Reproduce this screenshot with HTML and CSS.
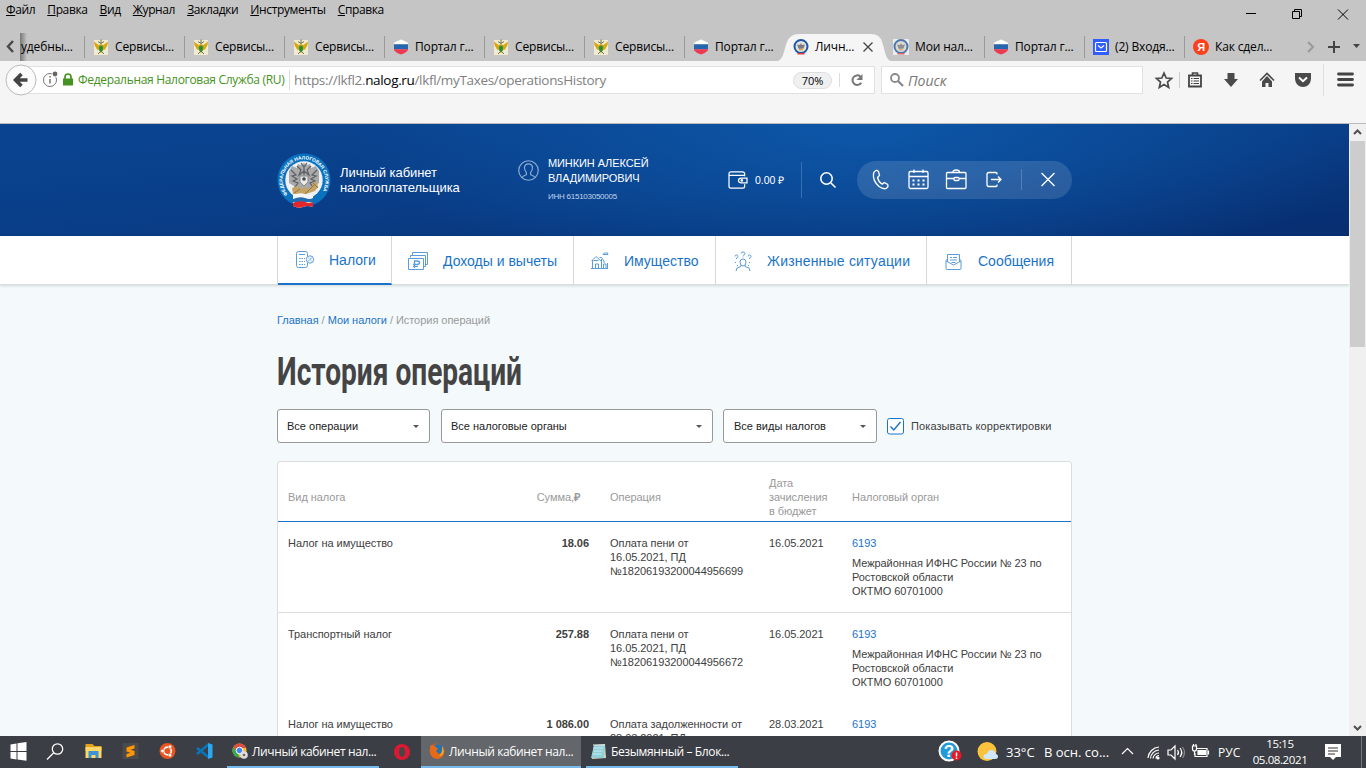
FILE: index.html
```html
<!DOCTYPE html>
<html lang="ru">
<head>
<meta charset="utf-8">
<title>История операций</title>
<link rel="stylesheet" href="styles.css">
</head>
<body>
<svg width="0" height="0" class="defs">
  <symbol id="fssp" viewBox="0 0 16 16"><rect x="1" y="1" width="14" height="15" fill="#efebd3"/><path d="M8 5 5.500 6 1 2.500 1.500 6 4 10.500 6 11 8 14.500 10 11 12 10.500 14.500 6 15 2.500 10.500 6z" fill="#d9a514"/><path d="M5 2.500 8 4.500 11 2.500M8 .5v4M5 15l3-3 3 3" stroke="#76734f" fill="none"/><path d="M8 6.200 10.200 8 9.600 11.500 8 13 6.400 11.500 5.800 8z" fill="#23913a"/></symbol>
  <symbol id="flag" viewBox="0 0 16 16"><path d="M1 5.300V4Q1.500 3 8 .5 14.500 3 15 4v1.300z" fill="#fff"/><path d="M1 5.300h14v5H1z" fill="#2467ae"/><path d="M1 10.300h14v1Q13 14 8 15.500 3 14 1 11.300z" fill="#ed3a50"/></symbol>
  <symbol id="fns" viewBox="0 0 16 16"><circle cx="8" cy="7.500" r="6.500" fill="#e5e3dc" stroke="#1d57a5" stroke-width="2"/><path d="M4 5.500 7 6l1-2 1 2 3-.5-1.500 4L8 11 5.500 9.500z" fill="#777b82"/><path d="m5.500 10 5-1-1 2.500h-3z" fill="#d4aa62"/><path d="M4.500 14h7v1.500h-7z" fill="#e33b40"/></symbol>
</svg>
<div class="window">
  <div class="menubar">
    <nav class="menus"><span><u>Ф</u>айл</span><span><u>П</u>равка</span><span><u>В</u>ид</span><span><u>Ж</u>урнал</span><span><u>З</u>акладки</span><span><u>И</u>нструменты</span><span><u>С</u>правка</span></nav>
    <svg class="winctl" viewBox="0 0 120 31" fill="none" stroke="#000"><path d="M10 13.500h10M56.500 11.500h7v7h-7zM58.500 11v-1.500h7v7H64M102 9.500l10 10M112 9.500l-10 10"/></svg>
  </div>
  <div class="tabs">
    <div class="scroll-left"><svg width="20" height="28" viewBox="0 0 20 28"><path d="m13 8-5 5.500 5 5.500" fill="none" stroke="#4a4a4a" stroke-width="2.500"/></svg></div>
    <div class="tab first"><span>удебны...</span></div>
    <div class="tab"><svg><use href="#fssp"/></svg><span>Сервисы...</span></div>
    <div class="tab"><svg><use href="#fssp"/></svg><span>Сервисы...</span></div>
    <div class="tab"><svg><use href="#fssp"/></svg><span>Сервисы...</span></div>
    <div class="tab"><svg><use href="#flag"/></svg><span>Портал г...</span></div>
    <div class="tab"><svg><use href="#fssp"/></svg><span>Сервисы...</span></div>
    <div class="tab"><svg><use href="#fssp"/></svg><span>Сервисы...</span></div>
    <div class="tab last"><svg><use href="#flag"/></svg><span>Портал г...</span></div>
    <div class="tab active"><svg class="shape" viewBox="0 0 124 29"><path d="M0 29C13 29 11 18 15 9Q18 1 27 1H99Q108 1 110 9C114 18 112 29 124 29z" fill="#f5f5f5"/></svg><svg><use href="#fns"/></svg><span>Личн...</span><svg class="close" viewBox="0 0 10 10"><path d="m.5.5 9 9m0-9-9 9" stroke="#444" stroke-width="1.300"/></svg></div>
    <div class="tab"><svg class="pale"><use href="#fns"/></svg><span>Мои нал...</span></div>
    <div class="tab"><svg><use href="#flag"/></svg><span>Портал г...</span></div>
    <div class="tab"><svg viewBox="0 0 16 16"><path d="M0 0h16v16H0z" fill="#315efb"/><rect x="2.500" y="3.500" width="11" height="9" rx="1" fill="none" stroke="#fff" stroke-width="1.200"/><path d="m5 6.500 3 2.500 3-2.500" fill="none" stroke="#fff" stroke-width="1.200"/></svg><span>(2) Входя...</span></div>
    <div class="tab last"><svg viewBox="0 0 16 16"><circle cx="8" cy="8" r="8" fill="#fc3f1d"/><text x="4.200" y="12.300" class="ya">Я</text></svg><span>Как сдел...</span></div>
    <svg class="tabctl" viewBox="0 0 66 28" fill="none"><path d="m8 9 5 5-5 5" stroke="#999" stroke-width="2"/><path d="M28 14h12M34 8v12" stroke="#444" stroke-width="2"/><path d="M53 11h7l-3.500 4z" fill="#444"/></svg>
  </div>
  <div class="toolbar">
    <div class="back"><svg viewBox="0 0 32 32"><circle cx="16" cy="16" r="15" fill="#fbfbfb" stroke="#bbb"/><path d="M22.500 16H11m5.500-6L10.500 16l6 6" fill="none" stroke="#444" stroke-width="3.600"/></svg></div>
    <div class="url">
      <svg class="info" viewBox="0 0 30 20"><circle cx="8" cy="10" r="6.500" fill="none" stroke="#777"/><path d="M8 9v4.500M8 6v1.500" stroke="#777" stroke-width="1.500"/><circle cx="13" cy="4" r="3.200" fill="#fff"/><circle cx="13" cy="4" r="2.400" fill="#666"/><path d="M23 9V7a3 3 0 0 1 6 0v2" fill="none" stroke="#459221" stroke-width="1.700"/><path d="M21 8.500h10v7H21z" fill="#459221"/></svg>
      <span class="owner">Федеральная Налоговая Служба (RU)</span>
      <span class="address">https://lkfl2.<b>nalog.ru</b>/lkfl/myTaxes/operationsHistory</span>
      <span class="zoom">70%</span>
      <svg class="reload" viewBox="0 0 14 14"><path d="M11.300 9.800A4.800 4.800 0 1 1 10.300 3.400" fill="none" stroke="#777" stroke-width="2"/><path d="M12.500 1v6H6.500z" fill="#777"/></svg>
    </div>
    <div class="search"><svg viewBox="0 0 14 14"><circle cx="5" cy="5" r="4" fill="none" stroke="#888" stroke-width="1.800"/><path d="m8 8 5 5" stroke="#888" stroke-width="2.300"/></svg><i>Поиск</i></div>
    <svg class="tools" viewBox="0 0 223 32"><path d="m21 9 2.200 5 5.300.5-4 3.500 1.200 5.500-4.700-3-4.700 3 1.200-5.500-4-3.500 5.300-.5z" fill="none" stroke="#4a4a4a" stroke-width="1.700"/><path d="M36.500 8v16" stroke="#ccc"/><path d="M46 11.500h12v11H46z" fill="#f5f5f5" stroke="#444" stroke-width="1.800"/><path d="M49.500 11V9h5v2" fill="none" stroke="#444" stroke-width="1.600"/><path d="M48 14.500h1.500m1 0H56m-8 2.500h1.500m1 0H56m-8 2.500h1.500m1 0H56" stroke="#444"/><path d="M84.500 9h7v6H95l-7 8-7-8h3.500z" fill="#4a4a4a"/><path d="m117 16.500 7-7 7 7" fill="none" stroke="#4a4a4a" stroke-width="1.600"/><path d="M119 17.500 124 12l5 5.500V23h-3.500v-4h-3v4H119z" fill="#4a4a4a"/><path d="M152 9h16v5c0 12-16 12-16 0z" fill="#4a4a4a"/><path d="m156 13.500 4 3.700 4-3.700" fill="none" stroke="#fff" stroke-width="2"/><path d="M180.500 0v32" stroke="#ddd"/><path d="M195.500 10h14m-14 5.500h14m-14 5.500h14" stroke="#444" stroke-width="2.800" stroke-linecap="round"/></svg>
  </div>
  <div class="viewport">
    <main class="page">
      <header class="hero">
        <div class="wrap hero-row">
          <div class="brand">
            <svg class="emblem" viewBox="0 0 54 58">
              <circle cx="27" cy="28" r="26.500" fill="#0b72c0"/>
              <circle cx="27" cy="28" r="18.700" fill="#eef1f4"/>
              <path id="ring" d="M10.800 42.500A21.300 21.300 0 1 1 43.600 42" fill="none"/>
              <text class="ring-text"><textPath href="#ring" textLength="92" lengthAdjust="spacingAndGlyphs">ФЕДЕРАЛЬНАЯ НАЛОГОВАЯ СЛУЖБА</textPath></text>
              <path d="M27 11l3 2 3-1 1 4 5-2 3 5v12l-5 3-2 5-8 3-8-3-2-5-5-3V19l3-5 5 2 1-4 3 1z" fill="#aaa9aa"/>
              <path d="M20 14l4 4-2 5 5-4 5 4-2-5 4-4M14 18l5 5-4 1 5 3-4 2 5 2-3 4M40 18l-5 5 4 1-5 3 4 2-5 2 3 4M24 11l3 4 3-4M27 15v8" fill="none" stroke="#5b5f66" stroke-width="1.200"/>
              <path d="M23 24h8v6l-4 4-4-4z" fill="#e9e9e9" stroke="#888"/><circle cx="27" cy="27" r="1.800" fill="#414750"/>
              <path d="m15 36 5-2 4 3 4-2 4 2 6-7 2-1 1 6-3 4-9 3H16z" fill="#c3a366"/><path d="m17 41 6-4m5 5 10-10m-2-1 5 5" stroke="#987739"/>
              <path d="M16 43q7-3 12-1t8 0v13q-6-2-10 0t-10-1z" fill="#f5f5f5"/><path d="M16 47q7-3 12-1t8 0v5q-6-2-10 0t-10-1z" fill="#246bb0"/><path d="M16 51q7-3 12-1t8 0v5q-6-2-10 0t-10-1z" fill="#e3262b"/>
            </svg>
            <span>Личный кабинет<br>налогоплательщика</span>
          </div>
          <div class="user">
            <svg viewBox="0 0 20 20" fill="none" stroke="#8fadd4" stroke-width="1.100"><circle cx="10" cy="10" r="9.300"/><path d="M4 16.500q1-1.500 4-2.500v-2Q6 9.500 6.200 7 6.700 3.700 10 3.700T13.800 7q.2 2.500-1.800 5v2q3 1 4 2.500"/></svg>
            <div><p class="name">МИНКИН АЛЕКСЕЙ<br>ВЛАДИМИРОВИЧ</p><p class="inn">ИНН 615103050005</p></div>
          </div>
          <div class="wallet"><svg viewBox="0 0 21 19" fill="none" stroke="#fff" stroke-width="1.300"><path d="M17.500 5.500V3a2 2 0 0 0-2-2H3Q1 1 1 3v13q0 2 2 2h12.500q2 0 2-2v-2M1 4.500h16"/><path d="M20 7.500h-6q-3 0-3 2.500t3 2.500h6z"/><circle cx="14.500" cy="10" r=".8"/></svg><span>0.00 ₽</span></div>
          <svg class="find" viewBox="0 0 18 18" fill="none" stroke="#fff" stroke-width="1.600"><circle cx="7.500" cy="7.500" r="5.700"/><path d="m11.700 11.700 4.800 4.800"/></svg>
          <div class="pill"><svg viewBox="0 0 215 38" fill="none" stroke="#fff" stroke-width="1.300">
            <path d="m17.500 10.500 2.200-1.200 1.800 1.200 1 4-2 2q1 4.500 4.700 6.800l2-1.800 3.500 2 .3 2-1.800 2q-3 1-7.200-2-6.500-6-5.500-13z"/>
            <rect x="52" y="10.500" width="19" height="17" rx="1.500"/><path d="M52 15.500h19M57 8.500V12m9-3.500V12"/><path d="M55.500 19.500h2m3 0h2m3 0h2m-12 4h2m3 0h2m3 0h2" stroke-width="2"/>
            <rect x="89.500" y="11.500" width="19.500" height="16" rx="1"/><path d="M96 11q0-2 3.200-2t3.200 2M89.500 17.500H97m5 0h7"/><rect x="97" y="16.500" width="5" height="3" rx="1"/>
            <path d="M140 13.500v-1q0-1-1-1h-7q-2 0-2 2v10q0 2 2 2h7q1 0 1-1v-1M134 18.500h10m-3-3 3 3-3 3"/>
            <path d="M164.500 8v21" stroke="#557fb8" stroke-width="1"/><path d="m184.500 12 13 13m0-13-13 13"/>
          </svg></div>
        </div>
      </header>
      <nav class="mainnav"><div class="wrap nav-row">
        <a class="n1"><svg viewBox="0 0 20 20"><path d="M12.500 6V3.500q0-2-2-2h-7q-2 0-2 2v12q0 2 2 2h7q2 0 2-2V13M4 4.500h6M4 8.500h1.500m1 0H8m1 0h1m-6 3h1.500m1 0H8m1 0h1m-6 3h1.500m1 0H8m1 0h1"/><circle cx="15" cy="9.500" r="3.700"/><path d="m13 11.500 4-4M13.500 8h1m1 3h1"/></svg>Налоги</a>
        <a class="n2"><svg viewBox="0 0 20 20"><path d="M.5 7.500h15v11H.5zM2.500 6.500v-2h15v11h-2M4.500 4V1.500h15v12h-2"/><path d="M6.500 17v-7H9q2.500 0 2.500 1.700T9 13.400H5m0 2h5" stroke-width="1.300"/></svg>Доходы и вычеты</a>
        <a class="n3"><svg viewBox="0 0 20 20"><path d="m1.500 10 4.500-4.500L11 10M2.500 9v9M1 17.500h17M5.500 17v-4h3v4M11.500 17V8m-2-1.500h2L14 10v2M13.500 17v-4H16v4m1.500 0v-5M13 3.500q1-2 2.500-1.500 2.500-1 2.500 1.500h-5z"/><path d="M3.500 9.500h5"/></svg>Имущество</a>
        <a class="n4"><svg viewBox="0 0 20 20"><path d="M8 14v1.500l-4 1.500-1 3m9-6v1.500l4 1.500 1 3M7 11q0-3 3-3t3 3q0 4-3 4t-3-4zM8 2.500Q8 1 10 1t2 1.500-2 2m0 1v1M2 5.500Q2 4 3.500 4T5 5.500 3.500 7v1M15 5.500Q15 4 16.500 4T18 5.500 16.500 7v1M2 11.500h1m1 3h1m11-3h1m-2 3h1"/></svg>Жизненные ситуации</a>
        <a class="n5"><svg viewBox="0 0 20 20"><path d="M3.500 8 2 9.500v8q0 1 1 1h13q1 0 1-1v-8L15.500 8M2 10l7.500 4L17 10M3.500 11V3.500h12V11M6 6.500h2m1 0h4M6 9h7M7.500 11.500h4"/></svg>Сообщения</a>
      </div></nav>
      <section class="wrap content">
        <div class="crumbs"><a>Главная</a> / <a>Мои налоги</a> / История операций</div>
        <h1><span>История операций</span></h1>
        <div class="filters">
          <div class="select s1">Все операции</div><div class="select s2">Все налоговые органы</div><div class="select s3">Все виды налогов</div>
          <div class="check"><svg viewBox="0 0 17 17"><rect x=".5" y=".5" width="16" height="15.500" rx="2" fill="#fff" stroke="#1a73c9"/><path d="m3.500 8.500 3.300 3.500 6.700-8" fill="none" stroke="#1a73c9" stroke-width="1.400"/></svg><span>Показывать корректировки</span></div>
        </div>
        <div class="card">
          <div class="row head"><div>Вид налога</div><div class="sum">Сумма,<b>₽</b></div><div>Операция</div><div>Дата<br>зачисления<br>в бюджет</div><div>Налоговый орган</div></div>
          <div class="row r1"><div>Налог на имущество</div><div class="sum">18.06</div><div>Оплата пени от<br>16.05.2021, ПД<br>№18206193200044956699</div><div>16.05.2021</div><div><a>6193</a><p>Межрайонная ИФНС России № 23 по<br>Ростовской области<br>ОКТМО 60701000</p></div></div>
          <div class="row r2"><div>Транспортный налог</div><div class="sum">257.88</div><div>Оплата пени от<br>16.05.2021, ПД<br>№18206193200044956672</div><div>16.05.2021</div><div><a>6193</a><p>Межрайонная ИФНС России № 23 по<br>Ростовской области<br>ОКТМО 60701000</p></div></div>
          <div class="row r3"><div>Налог на имущество</div><div class="sum">1 086.00</div><div>Оплата задолженности от<br>28.03.2021, ПД</div><div>28.03.2021</div><div><a>6193</a></div></div>
        </div>
      </section>
    </main>
    <div class="scrollbar"><svg viewBox="0 0 17 17"><path d="m5 10 3.500-3.500L12 10" /></svg><div class="thumb"></div><svg viewBox="0 0 17 17"><path d="m5 7 3.500 3.500L12 7"/></svg></div>
  </div>
  <footer class="taskbar">
    <svg class="pins" viewBox="0 0 226 32">
      <path d="m10 8.500 6-1V15h-6zm7-1.200 9-1.300v9h-9zM10 16h6v7.500l-6-1zm7 0h9v8.700l-9-1.200z" fill="#fff"/>
      <circle cx="57" cy="13" r="5.200" fill="none" stroke="#fff" stroke-width="1.300"/><path d="m53 17-6.500 6.500" stroke="#fff" stroke-width="1.300"/>
      <path d="M85 8h7l2 2h7v5H85z" fill="#e3a21a"/><path d="M85 11h16v11H85z" fill="#ffd768"/><path d="M88 15h10v7h-3v-3h-4v3h-3z" fill="#3b92d4"/>
      <path d="M122 7h16v16h-16z" fill="#4b4b4b"/><path d="m126 11.500 8-2.500v3.500l-4 1.200 4 1.300v4l-8 2.500V18l4-1.300-4-1.200z" fill="#ff9800"/>
      <circle cx="167" cy="15" r="8" fill="#e95420"/><circle cx="167" cy="15" r="3.800" fill="none" stroke="#fff" stroke-width="1.700"/><g fill="#fff" stroke="#e95420" stroke-width=".6"><circle cx="162" cy="15" r="1.800"/><circle cx="169.500" cy="10.700" r="1.800"/><circle cx="169.500" cy="19.300" r="1.800"/></g>
      <path d="m196.500 12 12 9.500m-12-3.500 12-10" stroke="#0877b9" stroke-width="2.500"/><path d="m207.500 7 4.500 1.500v13l-4.500 1.500z" fill="#2aa8f2"/>
    </svg>
    <div class="task t1"><svg viewBox="0 0 16 16"><circle cx="7.500" cy="7.500" r="7" fill="#f2c22f"/><path d="M1.500 4A7 7 0 0 1 14 5H7.500L5 9z" fill="#dc4e41"/><path d="M1.500 4 6 11l2 3.500A7 7 0 0 1 1.500 4z" fill="#35a853"/><circle cx="7.500" cy="7.500" r="3.300" fill="#4285f4" stroke="#fff"/><circle cx="12" cy="12" r="3.800" fill="#ddd"/><circle cx="12" cy="12" r="1.300" fill="#667"/></svg><span>Личный кабинет нал...</span></div>
    <svg class="opera" viewBox="0 0 16 16"><circle cx="8" cy="8" r="8" fill="#dc1931"/><ellipse cx="8" cy="8" rx="3" ry="5" fill="#44464a"/></svg>
    <div class="task t2"><svg viewBox="0 0 16 16"><circle cx="8" cy="8" r="7.500" fill="#db5917"/><circle cx="9" cy="6.500" r="5.500" fill="#2572ad"/><path d="M1 4Q2 1 4 2q2 1 5 4L7 8l3 3q3 0 5-4 1 7-6 9Q1 15 1 8z" fill="#e66b19"/><path d="M13 3q3 4 1 8-1 2-4 2 4-4 3-10z" fill="#f5a724"/></svg><span>Личный кабинет нал...</span></div>
    <div class="task t3"><svg viewBox="0 0 16 16"><path d="m3 2 11-1 1 14-14 1z" fill="#d8d3ba"/><path d="M3 2h11l-1 13H0z" fill="#90ced8"/><path d="M2.500 5h10m-10 3h9m-10 3h9" stroke="#c6edf2"/><path d="M3 1v2m2-2v2m2-2v2m2-2v2m2-2v2m2-2v2" stroke="#e9eeee"/></svg><span>Безымянный – Блок...</span></div>
    <div class="tray">
      <svg class="help" viewBox="0 0 24 24"><circle cx="11" cy="11" r="9.500" fill="#239bd7" stroke="#fff" stroke-width="2"/><text x="5.800" y="17" class="q">?</text><circle cx="18.500" cy="15.500" r="5" fill="#e81923"/><path d="M18.500 12.500v4m0 1v1.500" stroke="#fff" stroke-width="1.500"/></svg>
      <svg class="weather" viewBox="0 0 22 20"><circle cx="10" cy="9.500" r="9.500" fill="#fbc23b"/><path d="M10 17q-4 0-3.500-3Q7 11.500 10 12q1-4 4.500-4t4 4q2.500 0 2.500 2.500t-3 2.500z" fill="#cfe8fb"/></svg>
      <span class="temp">33°C</span><span class="cond">В осн. со...</span>
      <svg class="trayicons" viewBox="0 0 92 24" fill="none" stroke="#fff" stroke-width="1.200"><path d="m1 14 5.500-5.500L12 14"/><path d="M27 18A12 12 0 0 1 38 7M29.500 18.500A9 9 0 0 1 38 10M32 18.500A6 6 0 0 1 38 13M35 18.500a3 3 0 0 1 3-3"/><circle cx="37" cy="18" r="1" fill="#fff"/><path d="M47 10h3l4-4v13l-4-4h-3zM56.500 10q2 2.500 0 5M59 8q3.500 4.500 0 9"/><path d="M61.500 7q4 5.500 0 11" stroke="#888"/><path d="M76 8.500h10v8H74V13M87.500 10.500v4M71.500 6v3q0 2 2 2t2-2V6zM72.500 6V4m2.500 2V4M73.500 11v4"/><path d="M77 10.500h7.500v4H77z" fill="#fff"/></svg>
      <span class="lang">РУС</span><span class="clock"><span>15:15</span><span>05.08.2021</span></span>
      <svg class="note" viewBox="0 0 16 16"><path d="M0 0h16v13h-5l-3 3-3-3H0z" fill="#fff"/><path d="M3 4h10M3 7h10M3 10h7" stroke="#333"/></svg>
    </div>
    <i class="peek"></i>
  </footer>
</div>
</body>
</html>
```
FILE: styles.css
```css
* { box-sizing: border-box; }
body { margin: 0; font-family: "Open Sans", "Noto Sans", sans-serif; font-size: 12px; color: #000; overflow: hidden; }
p { margin: 0; }
svg { flex: none; }
.defs { position: absolute; }
.window { width: 1366px; height: 768px; display: flex; flex-direction: column; white-space: nowrap; }
.menubar { height: 33px; flex: none; background: #c5c5c5; display: flex; justify-content: space-between; }
.menus { display: flex; gap: 12px; padding: 1px 0 0 6px; line-height: 17px; letter-spacing: -.37px; }
.winctl { width: 120px; height: 31px; margin-right: 10px; }
.tabs { height: 28px; flex: none; background: #c5c5c5; display: flex; letter-spacing: -.15px; }
.scroll-left { width: 20px; }
.tab { width: 100px; height: 28px; display: flex; align-items: center; gap: 6px; padding-left: 9px; position: relative; }
.tab > svg { width: 16px; height: 16px; }
.tab > span { margin-top: -1px; }
.tab:not(.last):not(.active)::after { content: ""; position: absolute; right: -1px; top: 3px; width: 1px; height: 22px; background: #999; }
.first { width: 64px; padding-left: 1px; background: linear-gradient(90deg, #777, #c5c5c500 7px); }
.tab.first::after { right: -1px; }
.active { z-index: 1; }
.tab.active > .shape { position: absolute; left: -12px; top: 0; width: 124px; height: 29px; }
.tab.active > :not(.shape) { position: relative; }
.tab.active > .close { width: 10px; height: 10px; margin-left: 3px; }
.pale { opacity: .7; background: #fff; }
.ya { font: bold 11px "Liberation Sans", sans-serif; fill: #fff; }
.tabctl { width: 66px; height: 28px; margin-left: auto; }
.toolbar { height: 63px; flex: none; background: #f5f5f5; border-bottom: 1px solid #bbb; display: flex; align-items: flex-start; padding: 3px 0 0 5px; }
.back { width: 32px; height: 32px; z-index: 1; }
.back svg { display: block; }
.url { width: 849px; height: 28px; margin: 2px 0 0 -11px; background: #fff; border: 1px solid #e1e1e1; display: flex; align-items: center; }
.info { width: 30px; height: 20px; margin-left: 15px; overflow: visible; }
.owner { color: #459221; font-size: 12px; letter-spacing: -.31px; width: 212px; margin-left: 6px; border-right: 1px solid #ddd; line-height: 20px; }
.address { color: #808080; font-size: 13.500px; margin-left: 4px; letter-spacing: -.33px; }
.address b { font-weight: 400; color: #000; }
.zoom { margin-left: auto; width: 39px; height: 17px; line-height: 15px; border: 1px solid #ddd; border-radius: 9px; background: #f0f0f0; text-align: center; font-size: 11px; }
.reload { width: 14px; height: 14px; margin: 0 10px 0 18px; box-shadow: -10px 0 #fff, -11px 0 #ddd; }
.search { width: 262px; height: 28px; margin: 2px 0 0 6px; background: #fff; border: 1px solid #e1e1e1; display: flex; align-items: center; gap: 4px; padding-left: 8px; color: #777; font-size: 14px; }
.search svg { width: 14px; height: 14px; }
.tools { width: 223px; height: 32px; }
.viewport { height: 612px; flex: none; display: flex; overflow: hidden; }
.page { width: 1349px; height: 612px; overflow: hidden; background: #f4f9fc; font-family: "Liberation Sans", Arial, sans-serif; color: #404040; }
.wrap { width: 795px; margin-left: 277px; }
.hero { height: 112px; color: #fff; background: radial-gradient(ellipse 520px 170px at 860px 0, #0d57a8, #0d57a800), linear-gradient(175deg, #0a438f 15%, #093c85 55%, #072f72 95%); }
.hero-row { display: flex; align-items: flex-start; height: 112px; }
.brand { display: flex; width: 241px; gap: 9px; padding-top: 28px; font-size: 13px; line-height: 15px; letter-spacing: -.06px; }
.brand > span { padding-top: 13px; }
.emblem { width: 54px; height: 58px; }
.ring-text { fill: #fff; font: bold 4.800px "Liberation Sans", sans-serif; letter-spacing: 0; }
.user { display: flex; width: 210px; gap: 9px; padding-top: 32px; font-size: 11px; line-height: 15px; letter-spacing: -.1px; }
.user svg { width: 21px; height: 21px; margin-top: 4px; }
.inn { font-size: 8px; letter-spacing: -.25px; line-height: 10px; padding-top: 6px; color: #c1d4eb; }
.wallet { display: flex; width: 74px; height: 36px; margin-top: 38px; border-right: 1px solid #3870b5; align-items: center; gap: 7px; font-size: 10.500px; }
.wallet svg { width: 20px; height: 18px; }
.find { width: 18px; height: 18px; margin: 47px 0 0 17px; }
.pill { width: 215px; height: 38px; margin: 37px 0 0 20px; border-radius: 19px; background: rgba(255,255,255,.13); }
.mainnav { height: 49px; background: #fff; border-bottom: 1px solid #d8dde0; box-shadow: 0 1px 3px #0002; }
.nav-row { display: flex; height: 49px; border-left: 1px solid #d8d8d8; }
.nav-row a { height: 49px; display: flex; align-items: center; border-right: 1px solid #d8d8d8; color: #1a73c9; font-size: 14px; gap: 14px; padding-left: 17px; }
.nav-row svg { width: 20px; height: 20px; fill: none; stroke: #5c9cdb; stroke-width: 1; }
.nav-row .n1 { width: 114px; border-bottom: 2px solid #1a73c9; }
.n2 { width: 182px; } .n3 { width: 142px; } .n4 { width: 211px; letter-spacing: .2px; } .n5 { width: 145px; }
.nav-row .n2, .nav-row .n3 { padding-left: 16px; } .nav-row .n2 { gap: 15px; }
.content { padding-top: 28px; }
.crumbs { font-size: 11px; letter-spacing: -.04px; line-height: 14px; color: #999; }
.content a { color: #1a73c9; }
h1 { margin: 12px 0 0; height: 66px; font: bold 39px/66px Roboto, sans-serif; color: #444; }
h1 span { display: inline-block; transform: scaleX(.72); transform-origin: left; }
.filters { display: flex; margin-top: 4px; }
.select { height: 34px; border: 1px solid #999; border-radius: 3px; background: #fff; color: #222; font-size: 11px; line-height: 32px; padding: 0 10px 0 9px; display: flex; justify-content: space-between; align-items: center; }
.select::after { content: ""; border: 3px solid transparent; border-top-color: #555; border-bottom: 0; }
.s1 { width: 153px; } .s2 { width: 272px; margin-left: 11px; } .s3 { width: 154px; margin-left: 10px; padding-left: 10px; }
.check { display: flex; align-items: center; gap: 7px; margin-left: 10px; font-size: 11px; letter-spacing: .1px; }
.check svg { width: 17px; height: 17px; }
.card { margin-top: 18px; background: #fff; border: 1px solid #ddd; border-radius: 3px; }
.row { display: grid; grid-template-columns: 180px 100px 138px 62px 1fr; column-gap: 21px; padding-left: 10px; font-size: 11px; letter-spacing: -.05px; line-height: 14px; }
.sum { text-align: right; font-weight: 700; }
.head { height: 60px; align-items: center; color: #999; border-bottom: 1px solid #1a73c9; padding-top: 10px; }
.head .sum { font-weight: 400; padding-right: 9px; }
.r1 { height: 91px; padding-top: 14px; border-bottom: 1px solid #ddd; }
.r2 { height: 90px; padding-top: 14px; }
.r3 { height: 90px; padding-top: 14px; }
.row p { margin-top: 6px; }
.scrollbar { width: 17px; height: 612px; background: #f0f0f0; display: flex; flex-direction: column; }
.scrollbar svg { width: 17px; height: 17px; fill: none; stroke: #505050; stroke-width: 2; }
.scrollbar .thumb { height: 206px; margin: 0 1px auto; background: #cdcdcd; }
.taskbar { height: 32px; flex: none; background: #3b3e44; color: #fff; display: flex; align-items: center; }
.pins { width: 227px; height: 32px; }
.task { height: 32px; display: flex; align-items: center; gap: 4px; padding-left: 5px; border-bottom: 2px solid #76b9ed; letter-spacing: -.38px; }
.task svg { width: 16px; height: 16px; }
.t1 { width: 152px; } .t2 { width: 160px; background: #63666b; padding-left: 8px; } .t3 { width: 152px; margin-left: 5px; }
.opera { width: 16px; height: 16px; margin: 0 11px 0 15px; }
.tray { display: flex; align-items: center; height: 32px; margin-left: auto; margin-right: 20px; }
.help { width: 24px; height: 24px; }
.q { fill: #fff; font: bold 17px "Liberation Sans", sans-serif; }
.weather { width: 22px; height: 20px; margin-left: 15px; }
.temp { width: 38px; margin-left: 7px; font-size: 13px; }
.cond { width: 77px; font-size: 13px; }
.trayicons { width: 92px; height: 24px; }
.lang { margin-left: 5px; width: 35px; }
.clock { width: 54px; display: flex; flex-direction: column; align-items: center; line-height: 16px; font-size: 11.500px; letter-spacing: -.4px; }
.note { width: 16px; height: 16px; margin-left: 18px; }
.peek { width: 1px; height: 32px; background: #777; margin-right: 4px; }
```
